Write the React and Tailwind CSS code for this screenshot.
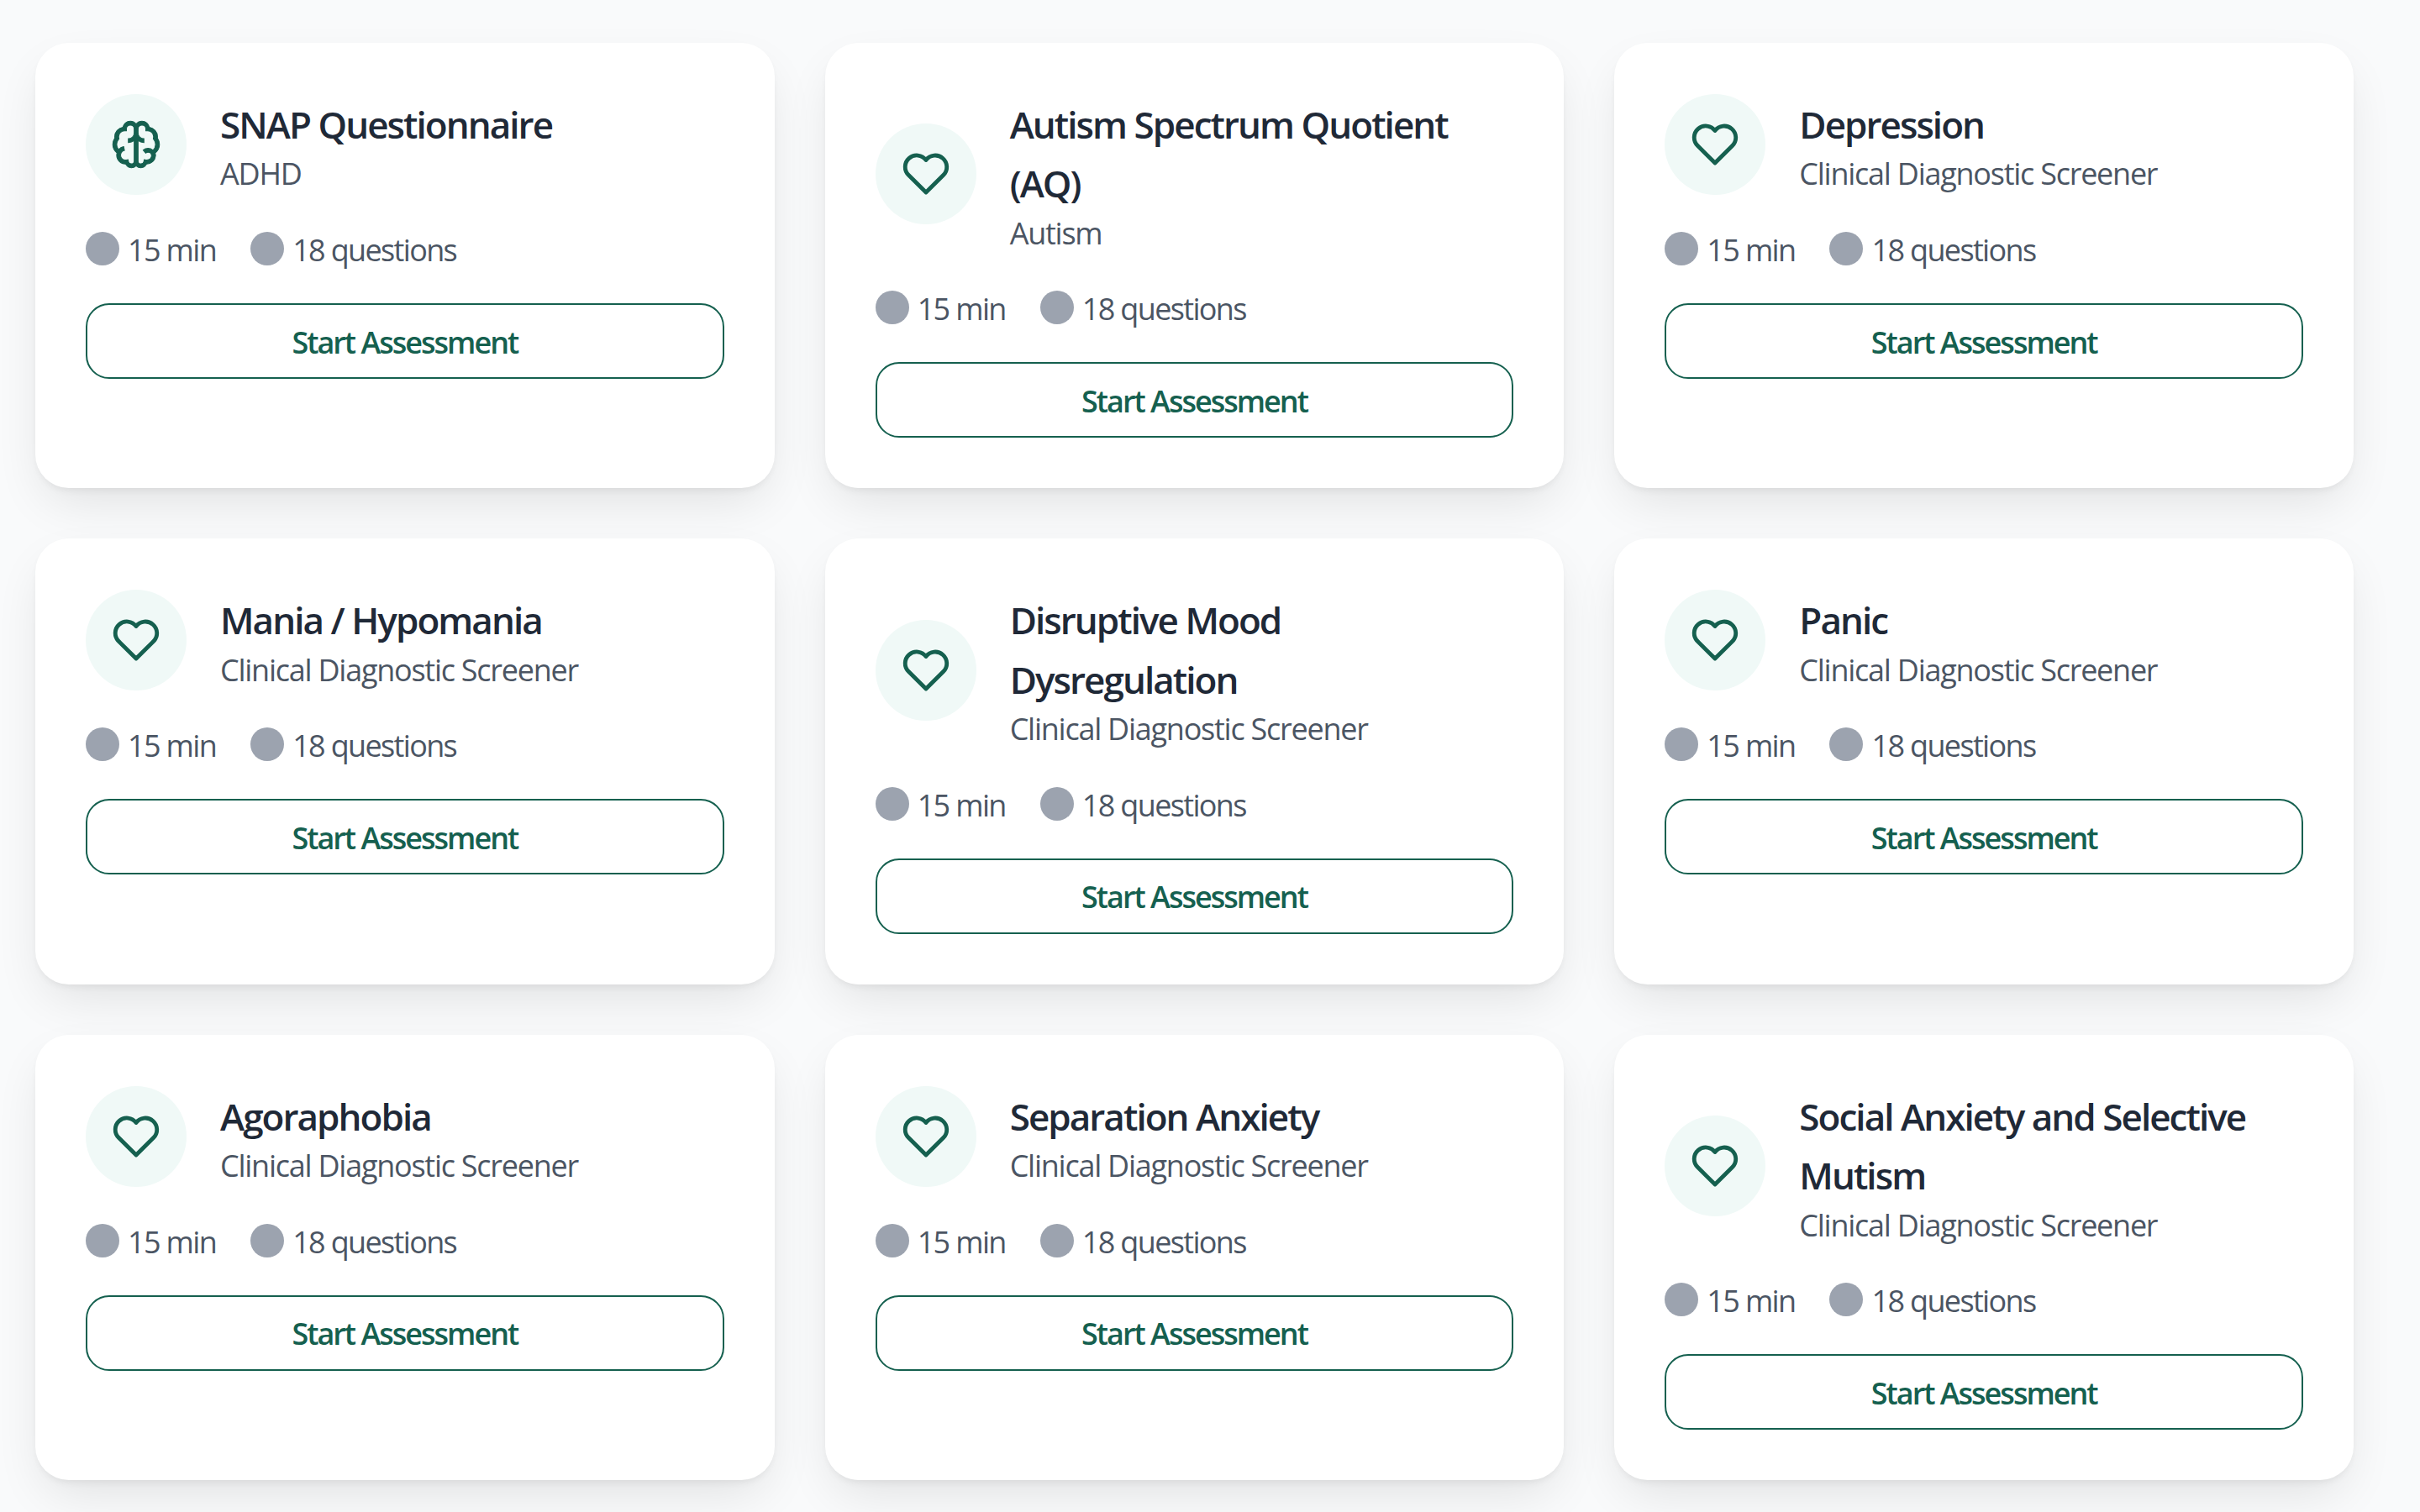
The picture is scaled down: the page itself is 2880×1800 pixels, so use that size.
import React from 'react';
import {TbHeart} from 'react-icons/tb';
import {LiaBrainSolid} from 'react-icons/lia';

const items = [
  { t: 'SNAP Questionnaire', s: 'ADHD', brain: true },
  { t: 'Autism Spectrum Quotient (AQ)', s: 'Autism' },
  { t: 'Depression', s: 'Clinical Diagnostic Screener' },
  { t: 'Mania / Hypomania', s: 'Clinical Diagnostic Screener' },
  { t: 'Disruptive Mood Dysregulation', s: 'Clinical Diagnostic Screener' },
  { t: 'Panic', s: 'Clinical Diagnostic Screener' },
  { t: 'Agoraphobia', s: 'Clinical Diagnostic Screener' },
  { t: 'Separation Anxiety', s: 'Clinical Diagnostic Screener' },
  { t: 'Social Anxiety and Selective Mutism', s: 'Clinical Diagnostic Screener' },
];

function Card({ t, s, brain }) {
  return (
    <div className="rounded-[40px] bg-white p-[60px] shadow-[0_24px_60px_-12px_rgba(0,0,0,0.11),0_5px_10px_-3px_rgba(0,0,0,0.07)]">
      <div className="flex items-center gap-10">
        <div className="flex h-[120px] w-[120px] shrink-0 items-center justify-center rounded-full bg-[#f0f9f7] text-[#15604f]">
          {brain ? <LiaBrainSolid size={74} strokeWidth={0.45} /> : <TbHeart size={66} strokeWidth={1.75} />}
        </div>
        <div className="min-w-0 flex-1">
          <h3 className="-mb-[2px] pt-[2px] text-[44px] font-semibold leading-[70.4px] tracking-[-1.95px] text-[#1f2937]">{t}</h3>
          <p className="text-[36px] leading-[51.6px] tracking-[-1.25px] text-[#4b5563]">{s}</p>
        </div>
      </div>
      <div className="mb-9 mt-[34px] flex items-center gap-[41px] text-[36px] leading-[55px] tracking-[-1.65px] text-[#4b5563]">
        <span className="flex items-center gap-[10px]"><span className="h-10 w-10 rounded-full bg-[#9ca3af]" /><span className="pt-[3px]">15 min</span></span>
        <span className="flex items-center gap-[10px]"><span className="h-10 w-10 rounded-full bg-[#9ca3af]" /><span className="pt-[3px]">18 questions</span></span>
      </div>
      <button className="h-[90px] w-full rounded-[28px] border-2 border-[#15604f] bg-white pt-[3px] text-[36px] font-semibold tracking-[-2px] text-[#15604f]">Start Assessment</button>
    </div>
  );
}

export default function App() {
  return (
    <div className="min-h-screen bg-[#f9fafb] pl-[42px] pt-[51px] font-['Open_Sans',sans-serif]">
      <div className="grid w-[2759px] grid-cols-3 gap-[60px]">
        {items.map((i) => <Card key={i.t} {...i} />)}
      </div>
    </div>
  );
}
